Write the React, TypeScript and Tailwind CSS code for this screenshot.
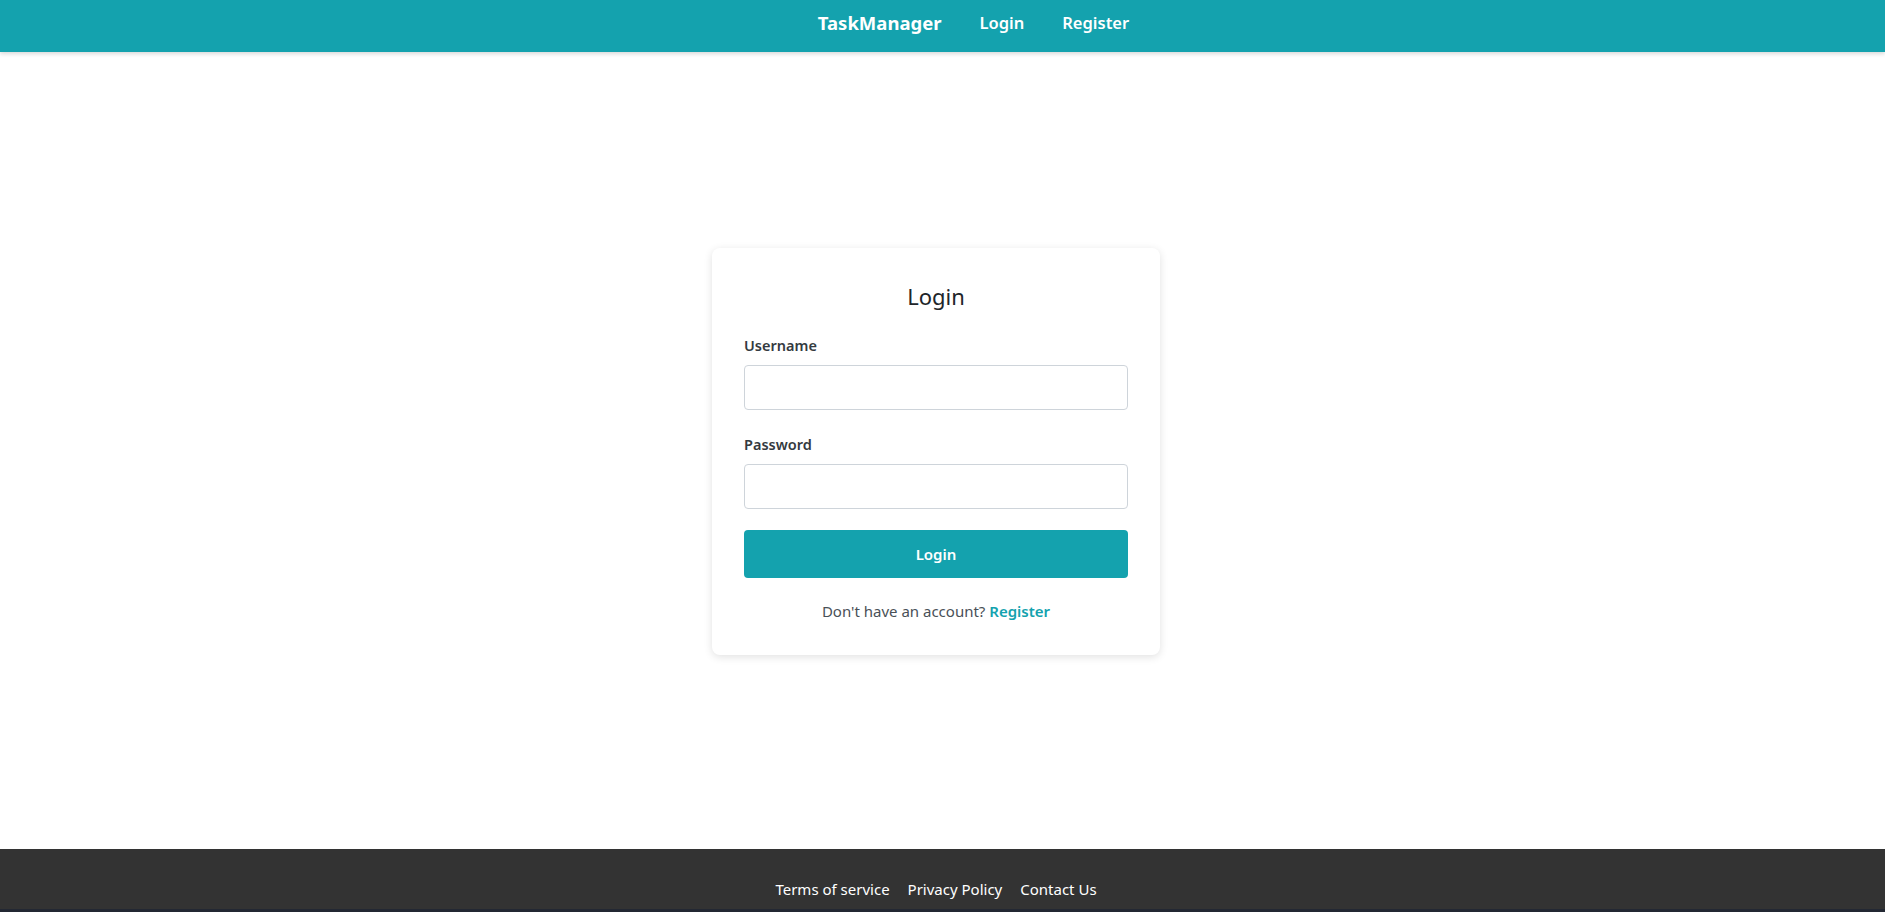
import React from "react";

export default function App() {
  return (
    <div
      className="flex h-[912px] flex-col overflow-hidden bg-white"
      style={{ fontFamily: '"Noto Sans", "Segoe UI", sans-serif' }}
    >
      <header className="relative z-10 flex h-[52px] shrink-0 items-center justify-center gap-[38px] bg-[#14a2ae] pb-[6px] pl-[62px] shadow-[0_2px_4px_rgba(0,0,0,0.15)]">
        <span className="text-[18.5px] font-bold text-white">TaskManager</span>
        <span className="text-[16.5px] font-semibold text-white">Login</span>
        <span className="text-[16.5px] font-semibold text-white">Register</span>
      </header>
      <main className="flex flex-1 items-center justify-center pr-[13px] pt-[2px]">
        <div className="w-[448px] rounded-lg bg-white px-8 pb-[33px] pt-[24px] shadow-[0_2px_8px_rgba(0,0,0,0.12)]">
          <h2 className="text-center text-[22px] font-normal leading-[48px] text-[#212529]">Login</h2>
          <div className="mt-[15px]">
            <label className="block text-[14.5px] font-semibold leading-[20px] text-[#343a40]">Username</label>
            <input
              type="text"
              className="mt-[10px] block h-[45px] w-full rounded-[4px] border border-[#ced4da] bg-white px-3 outline-none"
            />
          </div>
          <div className="mt-[24px]">
            <label className="block text-[14.5px] font-semibold leading-[20px] text-[#343a40]">Password</label>
            <input
              type="password"
              className="mt-[10px] block h-[45px] w-full rounded-[4px] border border-[#ced4da] bg-white px-3 outline-none"
            />
          </div>
          <button className="mt-[21px] block h-[48px] w-full rounded-[4px] bg-[#14a2ae] text-[15px] font-semibold text-white">
            Login
          </button>
          <p className="mt-[22px] text-center text-[15px] leading-[22px] text-[#495057]">
            Don't have an account?{" "}
            <a className="font-semibold text-[#14a2ae]">Register</a>
          </p>
        </div>
      </main>
      <footer className="flex h-[63px] shrink-0 items-start justify-center gap-[18px] border-b-[3px] border-[#232833] bg-[#333333] pr-[13px] pt-[29px] text-[15px] leading-[22px] text-white">
        <span>Terms of service</span>
        <span>Privacy Policy</span>
        <span>Contact Us</span>
      </footer>
    </div>
  );
}
